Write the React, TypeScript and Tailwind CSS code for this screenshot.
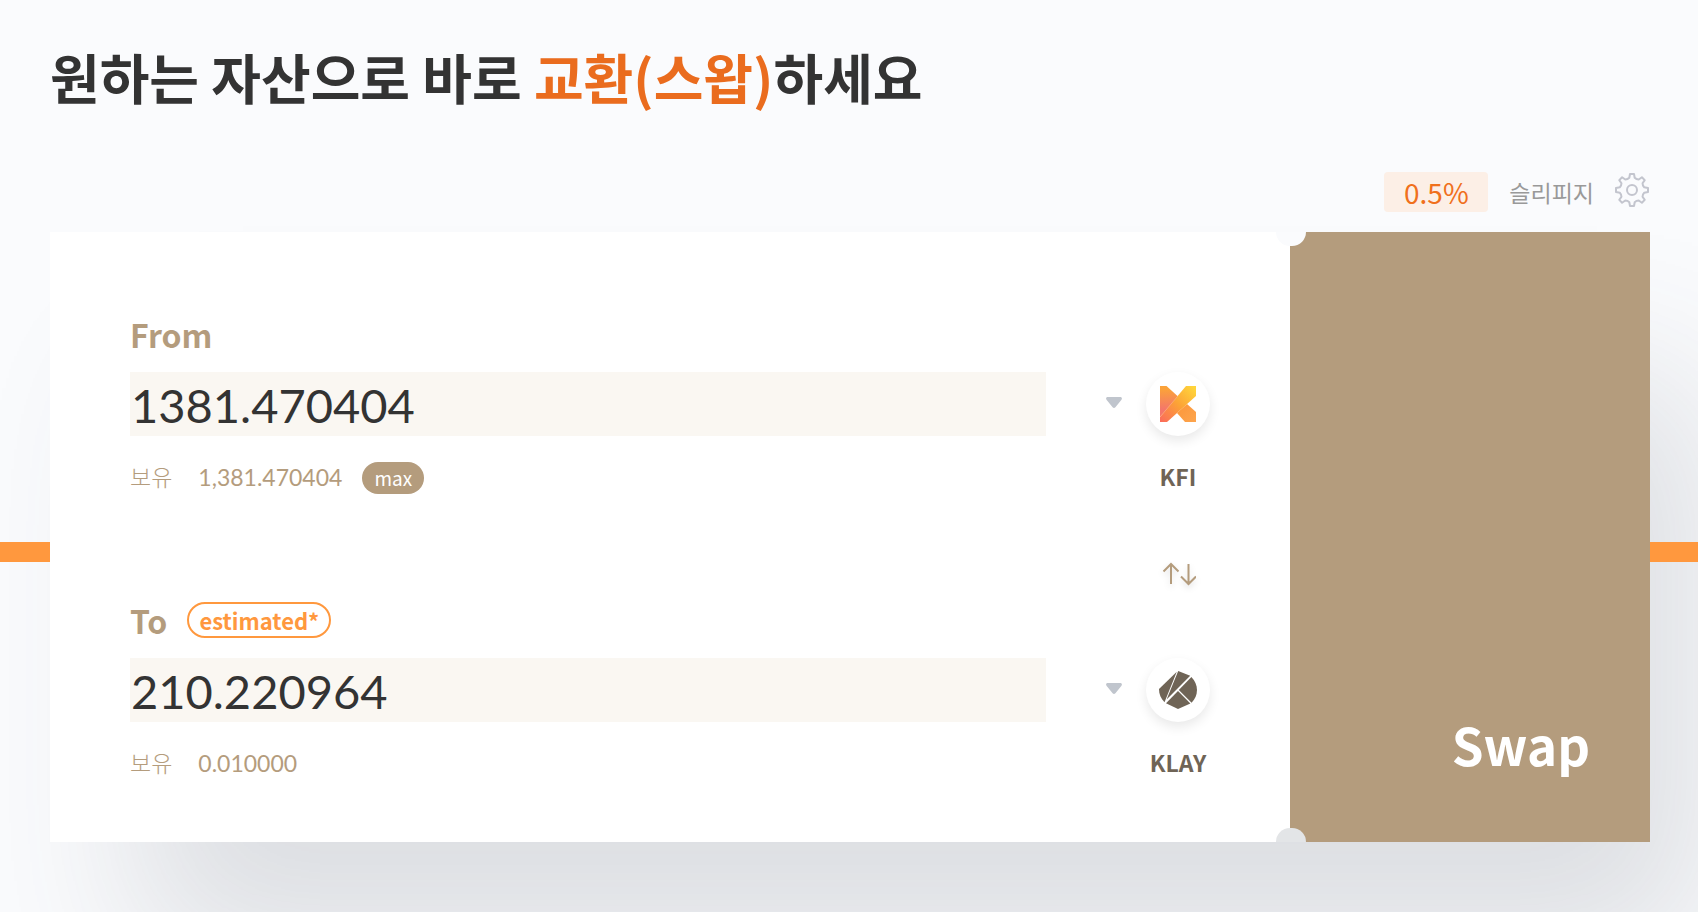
import { useState, type ReactNode } from "react";

const TEETH = Array.from({ length: 8 }, (_, i) => (i * Math.PI) / 4);

function gearPath(center: number): string {
  const at = (angle: number, across: number, out: number) => {
    const x = center + across * Math.cos(angle) + out * Math.sin(angle);
    const y = center + across * Math.sin(angle) - out * Math.cos(angle);
    return `${x.toFixed(2)} ${y.toFixed(2)}`;
  };
  const parts = TEETH.map((a, i) => {
    const mid = at(a + Math.PI / 8, 0, 11.4);
    const next = at(a + Math.PI / 4, -2.7, 12.2);
    return `${i === 0 ? "M" : "L"}${at(a, -2, 16)} L${at(a, 2, 16)} L${at(a, 2.7, 12.2)} Q${mid} ${next}`;
  });
  return `${parts.join(" ")} Z`;
}

function GearIcon() {
  return (
    <svg width="34" height="34" viewBox="0 0 34 34" fill="none" stroke="#c3c5ce" strokeWidth="2" strokeLinejoin="round" aria-hidden="true">
      <path d={gearPath(17)} />
      <circle cx="17" cy="17" r="5" />
    </svg>
  );
}

function CaretIcon() {
  return (
    <svg width="16" height="14" viewBox="0 0 16 14" fill="#c0c5cd" aria-hidden="true">
      <path d="M1.6 0H14.4C15.6 0 16.3 1.2 15.7 2.3C15.5 2.8 15.2 3.1 14.9 3.4L9.4 10.2C8.6 11.2 7.4 11.2 6.6 10.2L1.1 3.4C.8 3.1.5 2.8.3 2.3C-.3 1.2.4 0 1.6 0Z" />
    </svg>
  );
}

function ArrowsIcon() {
  return (
    <svg className="drop-shadow-md" width="36" height="24" viewBox="0 0 36 24" fill="none" stroke="#b49c7d" strokeWidth="2" aria-hidden="true">
      <path d="M11 22V2M3.5 9.5L11 2L18.5 9.5" />
      <path d="M28.500 2V22M21 14.500L28.500 22L36 14.500" />
    </svg>
  );
}

function KfiLogo() {
  return (
    <svg width="36" height="36" viewBox="0 0 36 36" aria-hidden="true">
      <defs>
        <linearGradient id="kfi-left" x1="0" y1="0" x2="0" y2="1">
          <stop offset="0.1" stopColor="#fba23a" />
          <stop offset="0.75" stopColor="#f4776a" />
        </linearGradient>
        <linearGradient id="kfi-band" x1="1" y1="0" x2="0" y2="1">
          <stop offset="0.05" stopColor="#ffd53b" />
          <stop offset="0.5" stopColor="#fca336" />
          <stop offset="1" stopColor="#fb6a5c" />
        </linearGradient>
        <linearGradient id="kfi-leg" x1="0" y1="0" x2="1" y2="1">
          <stop offset="0" stopColor="#fc9638" />
          <stop offset="1" stopColor="#fda54e" />
        </linearGradient>
      </defs>
      <path d="M0 0H6.500L17.500 10L15 17L0 31Z" fill="url(#kfi-left)" />
      <path d="M17 27L27 18L36 26V36H25Z" fill="url(#kfi-leg)" />
      <path d="M26 0H36V10L7 36H0V31Z" fill="url(#kfi-band)" />
      <path d="M0 31L17 11" stroke="#fcae85" strokeWidth="0.7" />
    </svg>
  );
}

function KlayLogo() {
  return (
    <svg width="38" height="38" viewBox="0 0 38 38" fill="#6f6456" aria-hidden="true">
      <path d="M17.800 .8L0 18C0 23 1.800 27.600 5.500 31.300Z" />
      <path d="M19.200 0L31.200 4.800L7.600 28.600L18.900 .8Z" />
      <path d="M32.400 6C39.800 13.500 39.800 24.500 32.600 31.700L19.800 18.900Z" />
      <path d="M7 32.200L19 20L31.400 32.600L19 38Z" />
    </svg>
  );
}

interface TokenFieldProps {
  id: string;
  label: string;
  badge?: ReactNode;
  value: string;
  onChange: (value: string) => void;
  balance: string;
  action?: ReactNode;
  symbol: string;
  logo: ReactNode;
}

function TokenField({ id, label, badge, value, onChange, balance, action, symbol, logo }: TokenFieldProps) {
  return (
    <section>
      <div className="mb-4 flex h-11 items-center gap-5">
        <label htmlFor={id} className="text-[32px] leading-[44px] font-bold text-[#b49c7d]">
          {label}
        </label>
        {badge}
      </div>
      <div className="flex items-center gap-15">
        <input
          id={id}
          value={value}
          onChange={(e) => onChange(e.target.value)}
          inputMode="decimal"
          className="h-16 min-w-0 flex-1 bg-[#faf7f2] pt-0.5 pl-px font-['Lato',sans-serif] text-[47px] text-[#333333] outline-none"
        />
        <button type="button" aria-label={`${symbol} 토큰 선택`} aria-haspopup="listbox" className="flex items-center gap-6">
          <CaretIcon />
          <span className="flex size-16 items-center justify-center rounded-full bg-white shadow-[0_5px_12px_rgba(0,0,0,0.09)]">
            {logo}
          </span>
        </button>
      </div>
      <div className="mt-[26px] flex h-8 items-center justify-between text-[23px] leading-7 text-[#b49c7d]">
        <div className="flex items-center">
          <span className="pb-1 font-light">보유</span>
          <span className="ml-[26px] pb-0.5 font-['Lato',sans-serif]">{balance}</span>
          {action}
        </div>
        <span className="flex w-16 justify-center pb-1 font-bold text-[#6f6456]">{symbol}</span>
      </div>
    </section>
  );
}

export default function App() {
  const [from, setFrom] = useState("1381.470404");
  const [to, setTo] = useState("210.220964");

  return (
    <main className="min-h-screen overflow-hidden bg-[#fafbfd] pt-[37px] pr-12 pb-[70px] pl-[50px] font-['Noto_Sans_CJK_KR',sans-serif]">
      <h1 className="text-[54px] leading-[80px] font-bold text-[#333333]">
        원하는 자산으로 바로 <span className="text-[#ea6c1e]">교환(스왑)</span>하세요
      </h1>

      <div className="mt-[55px] mb-5 flex h-10 items-center justify-end gap-[21px] pr-px">
        <span className="flex h-10 w-26 items-center justify-center rounded bg-[#fcefe6] text-[28px] leading-10 text-[#f0701c]">0.5%</span>
        <span className="text-[23px] leading-10 text-[#999999]">슬리피지</span>
        <button type="button" aria-label="슬리피지 설정" className="pb-1">
          <GearIcon />
        </button>
      </div>

      <div className="relative">
        <div className="absolute inset-0 shadow-[70px_128px_150px_-18px_rgba(62,73,84,0.155)]" />
        <div className="absolute top-[310px] -right-12 -left-[50px] h-5 bg-[#ff983e]" />
        <form className="relative flex" onSubmit={(e) => e.preventDefault()}>
          <div className="min-w-0 flex-1 bg-white px-20 pt-20 pb-[62px]">
            <TokenField
              id="from-amount"
              label="From"
              value={from}
              onChange={setFrom}
              balance="1,381.470404"
              symbol="KFI"
              logo={<KfiLogo />}
              action={
                <button
                  type="button"
                  onClick={() => setFrom("1381.470404")}
                  className="ml-5 h-8 rounded-full bg-[#b49c7d] px-3 text-[19px] leading-8 text-white"
                >
                  max
                </button>
              }
            />
            <div className="flex h-26 items-end justify-end pb-3">
              <button type="button" aria-label="토큰 방향 바꾸기" className="flex w-16 justify-center">
                <ArrowsIcon />
              </button>
            </div>
            <TokenField
              id="to-amount"
              label="To"
              badge={
                <span className="flex h-9 items-center rounded-full border-2 border-[#ff983e] px-2.5 text-[22px] font-bold text-[#ff983e]">
                  estimated*
                </span>
              }
              value={to}
              onChange={setTo}
              balance="0.010000"
              symbol="KLAY"
              logo={<KlayLogo />}
            />
          </div>
          <button type="submit" className="flex w-[360px] items-end justify-end bg-[#b49c7d] px-15 pb-[59px] text-[51px] leading-[78px] font-bold text-white">
            Swap
          </button>
          <span className="absolute top-0 right-[344px] h-3.5 w-[30px] rounded-b-[14px] bg-[#fafbfd]" />
          <span className="absolute right-[344px] bottom-0 h-3.5 w-[30px] rounded-t-[14px] bg-[#e3e5e7]" />
        </form>
      </div>
    </main>
  );
}
